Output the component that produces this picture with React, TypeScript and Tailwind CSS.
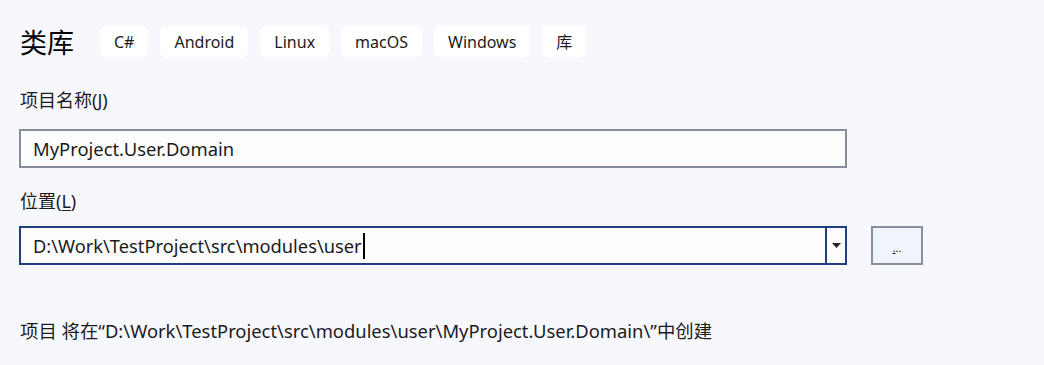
const FONT = "font-['Noto_Sans','Noto_Sans_CJK_SC',sans-serif]";

const TAGS = ["C#", "Android", "Linux", "macOS", "Windows", "库"];

function Tag({ label }: { label: string }) {
  return (
    <div className="flex h-[31px] items-center rounded-[6px] bg-white px-[14px] text-[16px] text-[#1b1b1b]">
      {label}
    </div>
  );
}

export default function App() {
  return (
    <div className={`${FONT} h-[365px] w-[1044px] overflow-hidden bg-[#f7f8fe] pl-[19px] text-[#1b1b1b]`}>
      <div className="flex items-center gap-3 pt-[26px]">
        <div className="mr-[14px] ml-px text-[27px] leading-[31px] font-['Noto_Sans_CJK_SC',sans-serif] text-black">类库</div>
        {TAGS.map((t) => (
          <Tag key={t} label={t} />
        ))}
      </div>

      <div className="mt-[32px] ml-px text-[18px] leading-[22px]">
        项目名称(<span className="underline underline-offset-2">J</span>)
      </div>
      <div className="mt-[18px] flex h-[39px] w-[828px] items-center border-2 border-[#868e9e] bg-[#fdfdfd] pl-[12px] text-[18.4px]">
        MyProject.User.Domain
      </div>

      <div className="mt-[22px] ml-px text-[18px] leading-[22px]">
        位置(<span className="underline underline-offset-2">L</span>)
      </div>
      <div className="mt-[14px] flex items-center">
        <div className="flex h-[39px] w-[828px] border-2 border-[#1e3f7c] bg-[#fdfdfd]">
          <div className="flex flex-1 items-center pl-[12px] text-[18.3px]">
            D:\Work\TestProject\src\modules\user
            <span className="ml-px inline-block h-[26px] w-[2px] bg-black" />
          </div>
          <div className="flex w-[20px] items-center justify-center border-l-2 border-[#1e3f7c]">
            <svg width="9" height="5" viewBox="0 0 9 5">
              <path d="M0 0H9L4.5 5Z" fill="#222" />
            </svg>
          </div>
        </div>
        <div className="ml-[24px] flex h-[39px] w-[52px] items-end justify-center border-2 border-[#878fa1] bg-[#f0f4fc] pb-[10px] text-[11px] leading-none">
          <span>
            <span className="underline">.</span>..
          </span>
        </div>
      </div>

      <div className="mt-[55px] ml-px text-[18.4px] leading-[22px]">
        项目 将在“D:\Work\TestProject\src\modules\user\MyProject.User.Domain\”中创建
      </div>
    </div>
  );
}
